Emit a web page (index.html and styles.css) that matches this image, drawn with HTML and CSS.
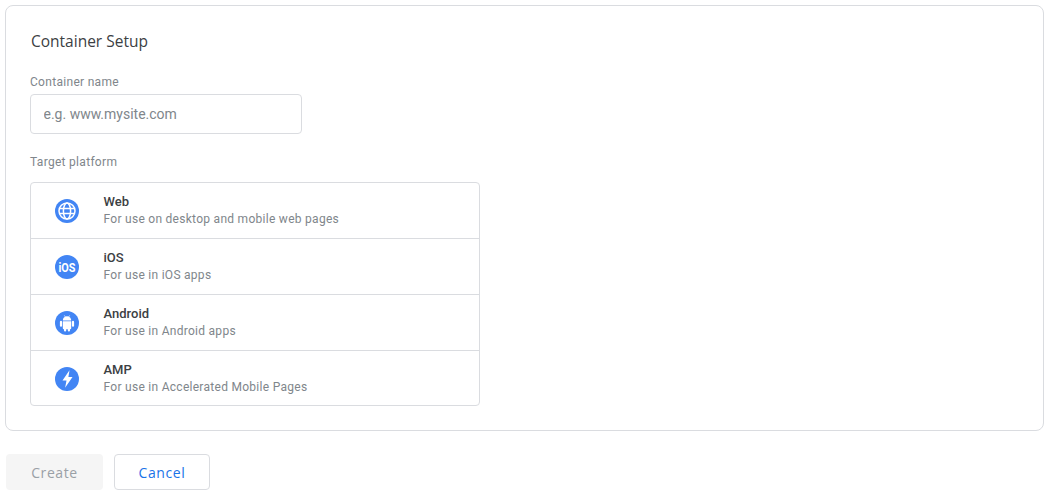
FILE: index.html
```html
<!doctype html>
<html>
	<head>
		<meta charset="utf-8" />
		<title>Container Setup</title>
		<link rel="stylesheet" href="styles.css">
	</head>
	<body>
		<div class="card">
			<h1 class="title">Container Setup</h1>
			<label class="fieldlabel name-label" for="name">Container name</label>
			<input id="name" class="nameinput" placeholder="e.g. www.mysite.com" type="text" autocomplete="off" />
			<span class="fieldlabel platform-label">Target platform</span>
			<div class="platforms">
				<div class="platform">
					<svg class="icon" viewBox="0 0 24 24">
						<circle cx="12" cy="12" r="12" fill="#4285f4" />
						<g fill="none" stroke="#fff" stroke-width="1.5">
							<circle cx="12" cy="12" r="8" />
							<ellipse cx="12" cy="12" rx="3.6" ry="8" />
							<path d="M4.600 9.400h14.800M4.600 14.600h14.800" />
						</g>
					</svg>
					<div class="platform-text">
						<span class="platform-name">Web</span>
						<span class="platform-desc">For use on desktop and mobile web pages</span>
					</div>
				</div>
				<div class="platform">
					<svg class="icon" viewBox="0 0 24 24">
						<circle cx="12" cy="12" r="12" fill="#4285f4" />
						<text class="ios-text" x="3.500" y="16.800" textLength="17" lengthAdjust="spacingAndGlyphs">iOS</text>
					</svg>
					<div class="platform-text">
						<span class="platform-name">iOS</span>
						<span class="platform-desc">For use in iOS apps</span>
					</div>
				</div>
				<div class="platform">
					<svg class="icon" viewBox="0 0 24 24">
						<circle cx="12" cy="12" r="12" fill="#4285f4" />
						<g fill="#fff">
							<path d="M7.800 9.400a4.200 4.200 0 0 1 8.400 0z" />
							<path d="M7.800 10.200h8.400v7a1 1 0 0 1-1 1H8.800a1 1 0 0 1-1-1z" />
							<rect x="4.900" y="9.800" width="2.200" height="6" rx="1.100" />
							<rect x="16.900" y="9.800" width="2.200" height="6" rx="1.100" />
							<rect x="9" y="17" width="2.200" height="3.600" rx="1.100" />
							<rect x="12.800" y="17" width="2.200" height="3.600" rx="1.100" />
						</g>
						<path d="M9.300 4.300l1.200 2M14.700 4.300l-1.200 2" stroke="#fff" stroke-width=".6" fill="none" />
					</svg>
					<div class="platform-text">
						<span class="platform-name">Android</span>
						<span class="platform-desc">For use in Android apps</span>
					</div>
				</div>
				<div class="platform">
					<svg class="icon" viewBox="0 0 24 24">
						<circle cx="12" cy="12" r="12" fill="#4285f4" />
						<path d="M14.500 3.300L7.500 13.500h4L10.100 20.800l7.400-10.700h-4.100z" fill="#fff" />
					</svg>
					<div class="platform-text">
						<span class="platform-name">AMP</span>
						<span class="platform-desc">For use in Accelerated Mobile Pages</span>
					</div>
				</div>
			</div>
		</div>
		<div class="actions">
			<button class="btn btn-create" disabled>Create</button>
			<button class="btn btn-cancel">Cancel</button>
		</div>
	</body>
</html>
```

FILE: styles.css
```css
body {
	margin: 0;
	padding: 5px 9px 0 5px;
	font-family: Roboto, sans-serif;
	background-color: #fff;
}
.card {
	height: 426px;
	box-sizing: border-box;
	padding: 25px 24px 0 24px;
	border: 1px solid #dadce0;
	border-radius: 8px;
}
.title {
	margin: 0 0 0 1px;
	font-family: "Open Sans", sans-serif;
	font-size: 15.5px;
	line-height: 20px;
	font-weight: 400;
	color: #3c4043;
}
.fieldlabel {
	display: block;
	font-size: 12px;
	line-height: 16px;
	letter-spacing: .3px;
	color: #80868b;
}
.name-label {
	margin-top: 23px;
}
.nameinput {
	display: block;
	width: 272px;
	height: 40px;
	box-sizing: border-box;
	margin-top: 4px;
	padding: 0 12.5px;
	border: 1px solid #dadce0;
	border-radius: 4px;
	font-family: Roboto, sans-serif;
	font-size: 14px;
	outline: none;
}
.nameinput::placeholder {
	color: #80868b;
	opacity: 1;
}
.platform-label {
	margin-top: 20px;
}
.platforms {
	width: 450px;
	box-sizing: border-box;
	margin-top: 12px;
	border: 1px solid #dadce0;
	border-radius: 4px;
}
.platform {
	display: flex;
	align-items: center;
	height: 56px;
	box-sizing: border-box;
	padding-left: 24px;
	border-bottom: 1px solid #dadce0;
}
.platform:last-child {
	height: 54px;
	padding-top: 1px;
	border-bottom: 0;
}
.icon {
	width: 24px;
	height: 24px;
	flex: none;
}
.ios-text {
	font-family: Roboto, sans-serif;
	font-size: 13px;
	font-weight: 700;
	fill: #fff;
}
.platform-text {
	margin-left: 24.5px;
	margin-bottom: 1px;
}
.platform-name {
	display: block;
	font-size: 13px;
	line-height: 17px;
	font-weight: 500;
	color: #3c4043;
}
.platform-desc {
	display: block;
	margin-top: 1px;
	font-size: 12px;
	line-height: 17px;
	letter-spacing: .28px;
	color: #80868b;
}
.actions {
	display: flex;
	gap: 11px;
	margin-top: 23px;
	padding-left: 1px;
}
.btn {
	height: 36px;
	box-sizing: border-box;
	border-radius: 4px;
	font-family: "Open Sans", sans-serif;
	font-size: 14px;
	font-weight: 500;
	letter-spacing: .6px;
}
.btn-create {
	width: 97px;
	border: 0;
	background-color: #f5f5f5;
	color: #9aa0a6;
}
.btn-cancel {
	width: 96px;
	border: 1px solid #dadce0;
	background-color: #fff;
	color: #1a73e8;
}
```
